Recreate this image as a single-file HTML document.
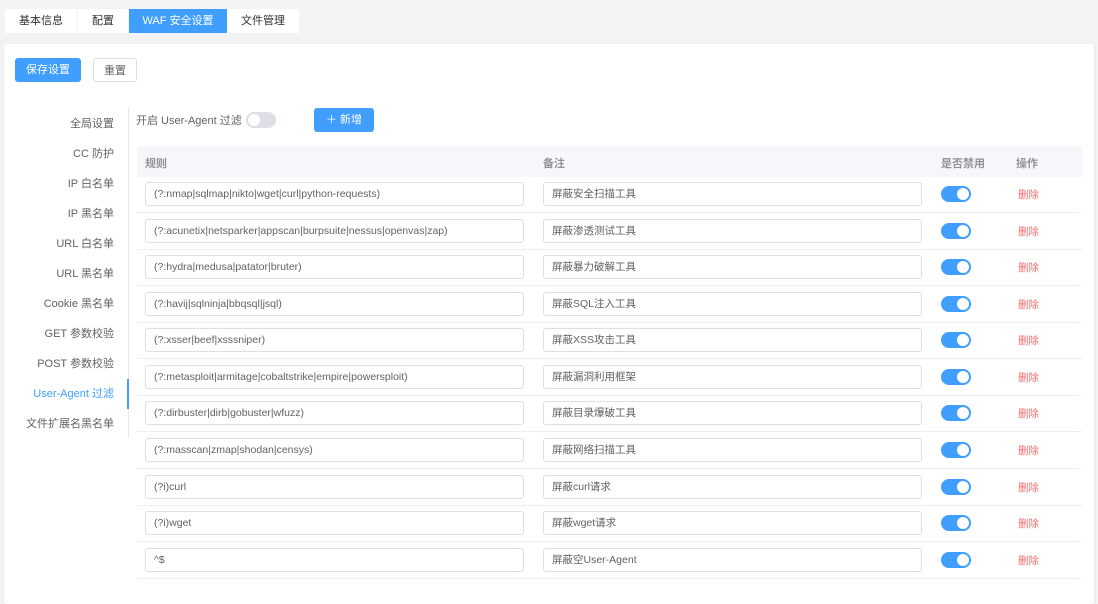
<!DOCTYPE html>
<html><head><meta charset="utf-8"><style>
*{box-sizing:border-box;margin:0;padding:0}
body{width:1098px;height:589px;overflow:hidden;background:#f2f3f5;font-family:"Liberation Sans","Noto Sans CJK SC",sans-serif;font-size:11px;color:#606266;position:relative}
.a{position:absolute}
.tab{position:absolute;top:9px;height:24px;line-height:24px;text-align:center;background:#fff;color:#303133;font-size:11px}
.card{position:absolute;left:4px;top:44px;width:1090px;height:560px;background:#fff;border-radius:3px;box-shadow:0 1px 4px rgba(0,0,0,.06)}
.btn{position:absolute;height:24px;line-height:24px;text-align:center;border-radius:3px;font-size:11px}
.side{position:absolute;right:984px;width:120px;text-align:right;color:#606266;font-size:11px}
.inp{position:absolute;height:24px;border:1px solid #dcdfe6;border-radius:3px;line-height:22px;padding-left:8px;color:#606266;font-size:10.5px;background:#fff}
.sw{position:absolute;width:30px;height:16px;border-radius:8px;background:#409eff}
.sw::after{content:"";position:absolute;right:2px;top:2px;width:12px;height:12px;border-radius:50%;background:#fff}
.del{position:absolute;left:1018px;color:#f56c6c;font-size:10.5px}
.line{position:absolute;left:137px;width:945px;height:1px;background:#ebeef5}
</style></head><body>
<div class="tab" style="left:5px;width:72px">基本信息</div>
<div class="tab" style="left:78px;width:50px">配置</div>
<div class="tab" style="left:129px;width:98px;background:#409eff;color:#fff">WAF 安全设置</div>
<div class="tab" style="left:227px;width:72px">文件管理</div>
<div class="card"></div>
<div class="btn" style="left:15px;top:58px;width:66px;background:#409eff;color:#fff">保存设置</div>
<div class="btn" style="left:93px;top:58px;width:44px;border:1px solid #dcdfe6;background:#fff;color:#606266">重置</div>

<div class="side" style="top:115px">全局设置</div>
<div class="side" style="top:145px">CC 防护</div>
<div class="side" style="top:175px">IP 白名单</div>
<div class="side" style="top:205px">IP 黑名单</div>
<div class="side" style="top:235px">URL 白名单</div>
<div class="side" style="top:265px">URL 黑名单</div>
<div class="side" style="top:295px">Cookie 黑名单</div>
<div class="side" style="top:325px">GET 参数校验</div>
<div class="side" style="top:355px">POST 参数校验</div>
<div class="side" style="top:385px;color:#409eff">User-Agent 过滤</div>
<div class="side" style="top:415px">文件扩展名黑名单</div>
<div class="a" style="left:128px;top:108px;width:1px;height:330px;background:#e4e7ed"></div>
<div class="a" style="left:127px;top:379px;width:2px;height:30px;background:#409eff"></div>

<div class="a" style="left:136px;top:112px;color:#606266">开启 User-Agent 过滤</div>
<div class="a" style="left:246px;top:112px;width:30px;height:16px;border-radius:8px;background:#dcdfe6"><div class="a" style="left:2px;top:2px;width:12px;height:12px;border-radius:50%;background:#fff"></div></div>
<div class="btn" style="left:314px;top:108px;width:60px;background:#409eff;color:#fff">＋ 新增</div>

<div class="a" style="left:137px;top:146px;width:945px;height:31px;background:#f5f7fa"></div>
<div class="a" style="left:145px;top:155px;color:#909399;font-weight:bold">规则</div>
<div class="a" style="left:543px;top:155px;color:#909399;font-weight:bold">备注</div>
<div class="a" style="left:941px;top:155px;color:#909399;font-weight:bold">是否禁用</div>
<div class="a" style="left:1016px;top:155px;color:#909399;font-weight:bold">操作</div>

<div class="inp" style="left:145px;top:182px;width:379px">(?:nmap|sqlmap|nikto|wget|curl|python-requests)</div><div class="inp" style="left:543px;top:182px;width:379px">屏蔽安全扫描工具</div><div class="sw" style="left:941px;top:186px"></div><div class="del" style="top:187px">删除</div><div class="line" style="top:212px"></div>
<div class="inp" style="left:145px;top:219px;width:379px">(?:acunetix|netsparker|appscan|burpsuite|nessus|openvas|zap)</div><div class="inp" style="left:543px;top:219px;width:379px">屏蔽渗透测试工具</div><div class="sw" style="left:941px;top:223px"></div><div class="del" style="top:224px">删除</div><div class="line" style="top:249px"></div>
<div class="inp" style="left:145px;top:255px;width:379px">(?:hydra|medusa|patator|bruter)</div><div class="inp" style="left:543px;top:255px;width:379px">屏蔽暴力破解工具</div><div class="sw" style="left:941px;top:259px"></div><div class="del" style="top:260px">删除</div><div class="line" style="top:285px"></div>
<div class="inp" style="left:145px;top:292px;width:379px">(?:havij|sqlninja|bbqsql|jsql)</div><div class="inp" style="left:543px;top:292px;width:379px">屏蔽SQL注入工具</div><div class="sw" style="left:941px;top:296px"></div><div class="del" style="top:297px">删除</div><div class="line" style="top:322px"></div>
<div class="inp" style="left:145px;top:328px;width:379px">(?:xsser|beef|xsssniper)</div><div class="inp" style="left:543px;top:328px;width:379px">屏蔽XSS攻击工具</div><div class="sw" style="left:941px;top:332px"></div><div class="del" style="top:333px">删除</div><div class="line" style="top:358px"></div>
<div class="inp" style="left:145px;top:365px;width:379px">(?:metasploit|armitage|cobaltstrike|empire|powersploit)</div><div class="inp" style="left:543px;top:365px;width:379px">屏蔽漏洞利用框架</div><div class="sw" style="left:941px;top:369px"></div><div class="del" style="top:370px">删除</div><div class="line" style="top:395px"></div>
<div class="inp" style="left:145px;top:401px;width:379px">(?:dirbuster|dirb|gobuster|wfuzz)</div><div class="inp" style="left:543px;top:401px;width:379px">屏蔽目录爆破工具</div><div class="sw" style="left:941px;top:405px"></div><div class="del" style="top:406px">删除</div><div class="line" style="top:431px"></div>
<div class="inp" style="left:145px;top:438px;width:379px">(?:masscan|zmap|shodan|censys)</div><div class="inp" style="left:543px;top:438px;width:379px">屏蔽网络扫描工具</div><div class="sw" style="left:941px;top:442px"></div><div class="del" style="top:443px">删除</div><div class="line" style="top:468px"></div>
<div class="inp" style="left:145px;top:475px;width:379px">(?i)curl</div><div class="inp" style="left:543px;top:475px;width:379px">屏蔽curl请求</div><div class="sw" style="left:941px;top:479px"></div><div class="del" style="top:480px">删除</div><div class="line" style="top:505px"></div>
<div class="inp" style="left:145px;top:511px;width:379px">(?i)wget</div><div class="inp" style="left:543px;top:511px;width:379px">屏蔽wget请求</div><div class="sw" style="left:941px;top:515px"></div><div class="del" style="top:516px">删除</div><div class="line" style="top:541px"></div>
<div class="inp" style="left:145px;top:548px;width:379px">^$</div><div class="inp" style="left:543px;top:548px;width:379px">屏蔽空User-Agent</div><div class="sw" style="left:941px;top:552px"></div><div class="del" style="top:553px">删除</div><div class="line" style="top:578px"></div>
</body></html>
